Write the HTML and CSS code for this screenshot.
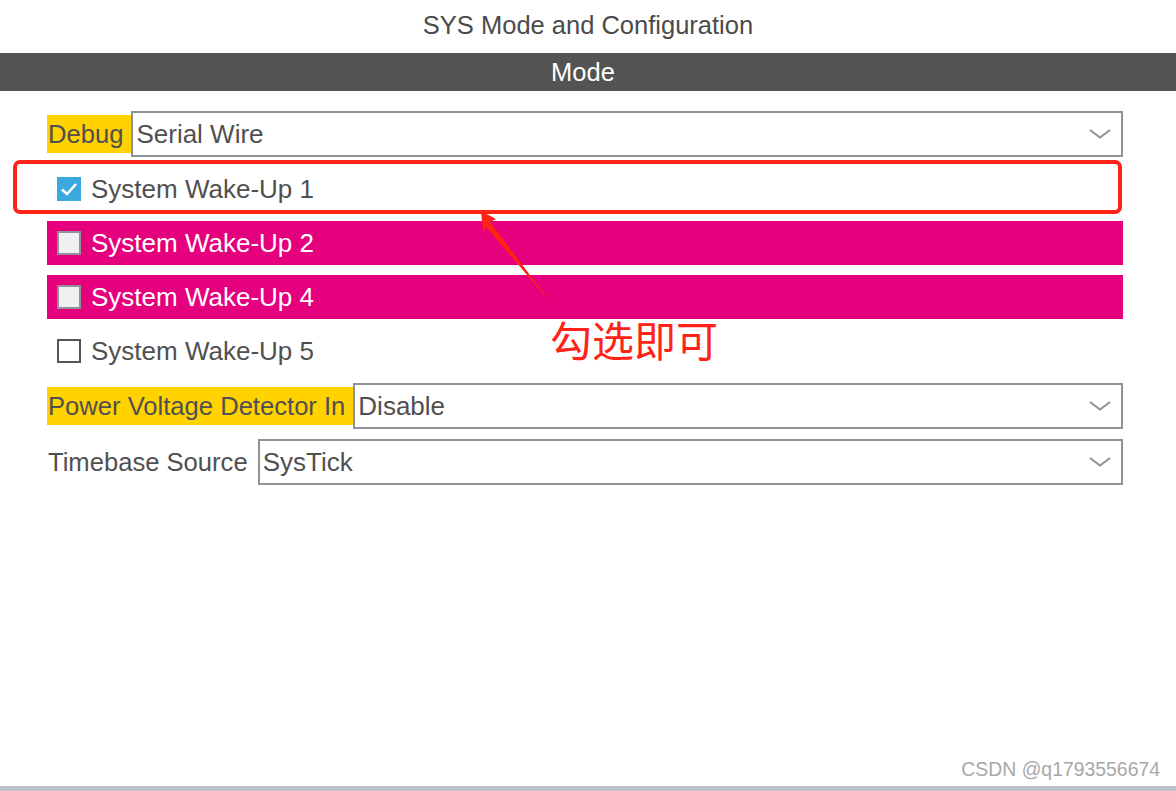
FILE: index.html
```html
<!DOCTYPE html>
<html>

<head>
  <meta http-equiv="Content-Type" content="text/html; charset=utf-8">
  <link rel="stylesheet" href="styles.css">
</head>

<body>

  <div class="page">
    <div class="title">SYS Mode and Configuration</div>
    <div class="bar">Mode</div>

    <div class="mode">
      <div class="field">
        <span class="label warn">Debug</span>
        <div class="select">Serial Wire
          <svg class="chevron" width="22" height="10" viewBox="0 0 22 10"><polyline points="1,1 11,8.5 21,1" fill="none" stroke="#8f9296" stroke-width="2"/></svg>
        </div>
      </div>

      <div class="check">
        <span class="box on"></span>System Wake-Up 1
      </div>
      <div class="check conflict">
        <span class="box"></span>System Wake-Up 2
      </div>
      <div class="check conflict">
        <span class="box"></span>System Wake-Up 4
      </div>
      <div class="check">
        <span class="box"></span>System Wake-Up 5
      </div>

      <div class="field">
        <span class="label warn">Power Voltage Detector In</span>
        <div class="select">Disable
          <svg class="chevron" width="22" height="10" viewBox="0 0 22 10"><polyline points="1,1 11,8.5 21,1" fill="none" stroke="#8f9296" stroke-width="2"/></svg>
        </div>
      </div>
      <div class="field">
        <span class="label">Timebase Source</span>
        <div class="select">SysTick
          <svg class="chevron" width="22" height="10" viewBox="0 0 22 10"><polyline points="1,1 11,8.5 21,1" fill="none" stroke="#8f9296" stroke-width="2"/></svg>
        </div>
      </div>
    </div>

    <div class="footer">
      <div class="mark">CSDN @q1793556674</div>
      <div class="strip"></div>
    </div>
  </div>

  <!-- screenshot annotations -->
  <svg class="annot" width="1176" height="791" viewBox="0 0 1176 791">
    <rect x="15" y="162" width="1105" height="50" rx="5" fill="none" stroke="#ff2216" stroke-width="4"/>
    <polygon points="481,211 496,219 490,222 551,303 486,227 483,232" fill="#ff2216"/>
  </svg>
  <div class="note">勾选即可</div>

</body>

</html>
```

FILE: styles.css
```css
body {
  margin: 0;
  font-family: "Liberation Sans", Arial, sans-serif;
  color: #505050;
  background: #fff;
}

.page {
  display: flex;
  flex-direction: column;
  min-height: 100vh;
}

.title {
  height: 53px;
  line-height: 50px;
  text-align: center;
  font-size: 25.5px;
  color: #4b4b4b;
}

.bar {
  height: 38px;
  line-height: 38px;
  padding-right: 10px;
  background-color: #525352;
  color: #fff;
  text-align: center;
  font-size: 25.5px;
}

.mode {
  flex: 1;
  display: flex;
  flex-direction: column;
  gap: 10px;
  padding: 20px 53px 0 47px;
  font-size: 26px;
}

.field {
  display: flex;
  align-items: center;
  height: 46px;
}

.label {
  height: 38px;
  line-height: 38px;
  padding: 0 8px 0 1px;
  font-size: 25.6px;
  white-space: nowrap;
}

.label.warn {
  background-color: #ffd200;
}

.field .label:not(.warn) {
  padding-right: 10px;
}

.select {
  flex: 1;
  position: relative;
  height: 42px;
  line-height: 42px;
  border: 2px solid #8f9296;
  padding-left: 3px;
  color: #505050;
}

.chevron {
  position: absolute;
  right: 10px;
  top: 16px;
}

.check {
  display: flex;
  align-items: center;
  gap: 10px;
  height: 44px;
  padding-left: 10px;
}

.check.conflict {
  background-color: #e5007d;
  color: #fff;
}

.box {
  width: 20px;
  height: 20px;
  border: 2px solid #555;
  background: #fff;
}

.conflict .box {
  border-color: #8f9296;
  background: #f0f0f2;
}

.box.on {
  width: 24px;
  height: 24px;
  border: none;
  background: #3aa9dd url("data:image/svg+xml,%3Csvg xmlns='http://www.w3.org/2000/svg' viewBox='0 0 24 24'%3E%3Cpolyline points='5,12.5 10,17 19,7' fill='none' stroke='white' stroke-width='2.6'/%3E%3C/svg%3E") center / 24px 24px no-repeat;
}

.footer {
  display: flex;
  flex-direction: column;
}

.mark {
  align-self: flex-end;
  margin: 0 16px 5px 0;
  font-size: 19.4px;
  color: #a8a8a8;
}

.strip {
  height: 5px;
  background-color: #bcc4ca;
}

.annot {
  position: absolute;
  left: 0;
  top: 0;
  pointer-events: none;
}

.note {
  position: absolute;
  left: 550px;
  top: 314px;
  font-family: "Noto Sans CJK SC", sans-serif;
  font-size: 42px;
  line-height: 50px;
  color: #ff2216;
}
```
